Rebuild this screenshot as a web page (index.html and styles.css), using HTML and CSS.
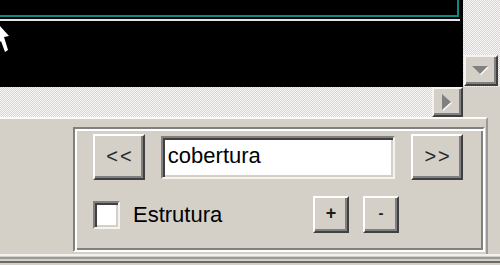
FILE: index.html
```html
<!DOCTYPE html>
<html>
	<head>
		<meta charset="UTF-8">
		<title>cobertura</title>
		<link rel="stylesheet" href="styles.css">
	</head>
	<body>
		<div class="top-row">
			<div class="viewport">
				<svg width="463" height="87" viewBox="0 0 463 87">
					<rect x="0" y="15" width="459" height="2" fill="#0a8a80"/>
					<rect x="457" y="0" width="2" height="17" fill="#0a8a80"/>
					<rect x="0" y="19" width="460" height="2" fill="#e6e2ee"/>
					<path d="M0 26 L9 36 L4 37 L8 50 L5 52 L1 41 L0 42 Z" fill="#fff"/>
				</svg>
			</div>
			<div class="vscroll">
				<div class="sbtn down"><span class="tri-down"></span></div>
			</div>
		</div>
		<div class="hrow">
			<div class="hscroll">
				<div class="sbtn right"><span class="tri-right"></span></div>
			</div>
			<div class="corner"></div>
		</div>
		<div class="panel">
			<div class="group">
				<div class="row">
					<button class="btn wide">&lt;&lt;</button>
					<div class="field">cobertura</div>
					<button class="btn wide">&gt;&gt;</button>
				</div>
				<div class="row second">
					<span class="check"></span>
					<span class="label">Estrutura</span>
					<button class="btn small plus">+</button>
					<button class="btn small minus">-</button>
				</div>
			</div>
		</div>
		<div class="status"></div>
	</body>
</html>
```

FILE: styles.css
```css
body{
    margin: 0;
    width: 500px;
    height: 265px;
    overflow: hidden;
    background: #d4d0c8;
    font-family: "Liberation Sans", Arial, sans-serif;
}
.top-row, .hrow{
    display: flex;
}
.viewport{
    width: 463px;
    height: 87px;
    background: #000;
}
.viewport svg{
    display: block;
}
.vscroll{
    width: 37px;
    height: 87px;
    padding: 55px 0 0 1px;
    box-sizing: border-box;
    background: repeating-conic-gradient(#f8f7f5 0 25%, #d9d6d0 0 50%) 0 0 / 2px 2px;
}
.sbtn{
    box-sizing: border-box;
    background: #d4d0c8;
    border-top: 2px solid #f4f3f0;
    border-left: 2px solid #f4f3f0;
    border-right: 2px solid #404040;
    border-bottom: 2px solid #404040;
    box-shadow: inset -2px -2px 0 #808080;
    display: flex;
    align-items: center;
    justify-content: center;
}
.down{
    width: 34px;
    height: 31px;
}
.tri-down{
    width: 0;
    height: 0;
    border-left: 8px solid transparent;
    border-right: 8px solid transparent;
    border-top: 8px solid #808080;
    margin: 0 2px 2px 0;
    filter: drop-shadow(1px 1px 0 #fff);
}
.hscroll{
    width: 463px;
    height: 30px;
    display: flex;
    justify-content: flex-end;
    background: repeating-conic-gradient(#f8f7f5 0 25%, #d9d6d0 0 50%) 0 0 / 2px 2px;
}
.right{
    width: 31px;
    height: 30px;
}
.tri-right{
    width: 0;
    height: 0;
    border-top: 8px solid transparent;
    border-bottom: 8px solid transparent;
    border-left: 9px solid #808080;
    margin: 0 2px 0 0;
    filter: drop-shadow(1px 1px 0 #fff);
}
.corner{
    width: 37px;
    height: 30px;
}
.panel{
    width: 488px;
    height: 137px;
    box-sizing: border-box;
    border-top: 2px solid #fbfbfa;
    border-right: 2px solid #9a9a9a;
    padding: 8px 0 0 73px;
}
.group{
    width: 412px;
    height: 125px;
    box-sizing: border-box;
    border-top: 2px solid #808080;
    border-left: 2px solid #808080;
    border-right: 2px solid #fff;
    border-bottom: 2px solid #fff;
    box-shadow: inset 2px 2px 0 #fff, inset -2px -2px 0 #808080;
    padding: 5px 20px 0 18px;
}
.row{
    display: flex;
    align-items: center;
}
.second{
    margin-top: 16px;
}
.btn{
    box-sizing: border-box;
    margin: 0;
    padding: 0;
    background: #d4d0c8;
    border-top: 2px solid #fff;
    border-left: 2px solid #fff;
    border-right: 2px solid #404040;
    border-bottom: 2px solid #404040;
    box-shadow: inset -2px -2px 0 #808080;
    font-family: "Liberation Sans", Arial, sans-serif;
    color: #1c1c1c;
    line-height: 1;
}
.wide{
    width: 52px;
    height: 46px;
    font-size: 20px;
    letter-spacing: 2px;
    padding: 0 0 3px 2px;
    color: #2a2a2a;
}
.small{
    width: 36px;
    height: 37px;
    font-size: 18px;
    font-weight: bold;
    padding-bottom: 3px;
}
.plus{
    margin-left: auto;
}
.minus{
    margin-left: 14px;
    margin-right: 64px;
    font-size: 15px;
    padding-bottom: 5px;
}
.field{
    width: 235px;
    height: 43px;
    box-sizing: border-box;
    margin: 0 16px 0 16px;
    background: #fff;
    border-top: 2px solid #808080;
    border-left: 2px solid #808080;
    border-right: 2px solid #f4f3f0;
    border-bottom: 2px solid #f4f3f0;
    box-shadow: inset 2px 2px 0 #404040, inset -2px -2px 0 #d4d0c8;
    padding: 5px 0 0 5px;
    font-size: 22px;
    color: #000;
}
.check{
    width: 27px;
    height: 28px;
    box-sizing: border-box;
    background: #fff;
    border-top: 2px solid #808080;
    border-left: 2px solid #808080;
    border-right: 2px solid #f4f3f0;
    border-bottom: 2px solid #f4f3f0;
    box-shadow: inset 2px 2px 0 #404040, inset -2px -2px 0 #d4d0c8;
}
.label{
    margin-left: 13px;
    font-size: 22px;
    color: #000;
}
.status{
    height: 11px;
    background: linear-gradient(to bottom, #f2f1ee 0 2px, #d4d0c8 2px 3px, #9a9a9a 3px 5px, #d4d0c8 5px 7px, #6c6c6c 7px 9px, #d4d0c8 9px);
}
```
